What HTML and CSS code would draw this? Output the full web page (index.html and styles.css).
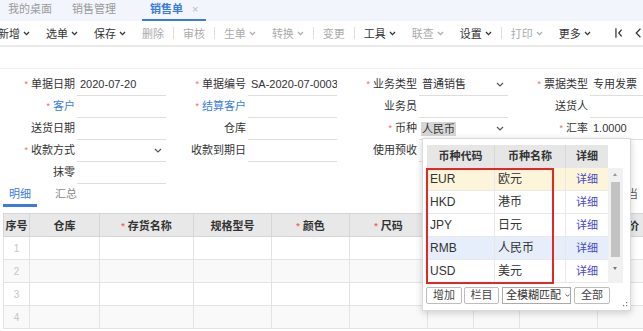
FILE: index.html
```html
<!DOCTYPE html>
<html lang="zh">
<head>
<meta charset="utf-8">
<link rel="stylesheet" href="styles.css">
</head>
<body>
<div class="tabbar">
  <span class="tab">我的桌面</span>
  <span class="tab tab2">销售管理</span>
  <span class="tab active">销售单<span class="close">×</span></span>
</div>

<div class="toolbar">
  <span class="ti">新增<svg class="cv" viewBox="0 0 7 5"><path d="M1 1 L3.5 3.6 L6 1"/></svg></span>
  <span class="ti">选单<svg class="cv" viewBox="0 0 7 5"><path d="M1 1 L3.5 3.6 L6 1"/></svg></span>
  <span class="ti">保存<svg class="cv" viewBox="0 0 7 5"><path d="M1 1 L3.5 3.6 L6 1"/></svg></span>
  <span class="ti dis plain">删除</span>
  <span class="sep"></span>
  <span class="ti dis plain">审核</span>
  <span class="sep"></span>
  <span class="ti dis">生单<svg class="cv" viewBox="0 0 7 5"><path d="M1 1 L3.5 3.6 L6 1"/></svg></span>
  <span class="ti dis nm">转换<svg class="cv" viewBox="0 0 7 5"><path d="M1 1 L3.5 3.6 L6 1"/></svg></span>
  <span class="sep"></span>
  <span class="ti dis plain">变更</span>
  <span class="sep"></span>
  <span class="ti">工具<svg class="cv" viewBox="0 0 7 5"><path d="M1 1 L3.5 3.6 L6 1"/></svg></span>
  <span class="ti dis">联查<svg class="cv" viewBox="0 0 7 5"><path d="M1 1 L3.5 3.6 L6 1"/></svg></span>
  <span class="ti nm">设置<svg class="cv" viewBox="0 0 7 5"><path d="M1 1 L3.5 3.6 L6 1"/></svg></span>
  <span class="sep"></span>
  <span class="ti dis">打印<svg class="cv" viewBox="0 0 7 5"><path d="M1 1 L3.5 3.6 L6 1"/></svg></span>
  <span class="ti">更多<svg class="cv" viewBox="0 0 7 5"><path d="M1 1 L3.5 3.6 L6 1"/></svg></span>
  <svg class="nav" viewBox="0 0 30 12"><path d="M1 1 V11"/><path d="M7 2.5 L4 6 L7 9.5"/><path d="M27 1.5 L22.5 6 L27 10.5"/></svg>
</div>

<div class="spacer"></div>

<div class="form">
  <div class="fld"><span class="lbl"><span class="req">*</span>单据日期</span><span class="inp">2020-07-20</span></div>
  <div class="fld"><span class="lbl"><span class="req">*</span>单据编号</span><span class="inp">SA-2020-07-0003</span></div>
  <div class="fld"><span class="lbl"><span class="req">*</span>业务类型</span><span class="inp">普通销售<svg class="dd" viewBox="0 0 8 5"><path d="M1 1 L4 4 L7 1"/></svg></span></div>
  <div class="fld"><span class="lbl"><span class="req">*</span>票据类型</span><span class="inp">专用发票</span></div>

  <div class="fld"><span class="lbl blue"><span class="req">*</span>客户</span><span class="inp"></span></div>
  <div class="fld"><span class="lbl blue"><span class="req">*</span>结算客户</span><span class="inp"></span></div>
  <div class="fld"><span class="lbl">业务员</span><span class="inp"></span></div>
  <div class="fld"><span class="lbl">送货人</span><span class="inp"></span></div>

  <div class="fld"><span class="lbl">送货日期</span><span class="inp"></span></div>
  <div class="fld"><span class="lbl">仓库</span><span class="inp"></span></div>
  <div class="fld"><span class="lbl"><span class="req">*</span>币种</span><span class="inp"><span class="sel">人民币</span><svg class="dd" viewBox="0 0 8 5"><path d="M1 1 L4 4 L7 1"/></svg></span></div>
  <div class="fld"><span class="lbl"><span class="req">*</span>汇率</span><span class="inp">1.0000</span></div>

  <div class="fld"><span class="lbl"><span class="req">*</span>收款方式</span><span class="inp"><span></span><svg class="dd" viewBox="0 0 8 5"><path d="M1 1 L4 4 L7 1"/></svg></span></div>
  <div class="fld"><span class="lbl">收款到期日</span><span class="inp"></span></div>
  <div class="fld"><span class="lbl">使用预收</span><span class="inp"></span></div>
  <div class="fld"></div>

  <div class="fld"><span class="lbl">抹零</span><span class="inp"></span></div>
</div>

<div class="subtabs">
  <span class="st active">明细</span>
  <span class="st st2">汇总</span>
  <span class="st-right">相当</span>
</div>

<table class="grid">
  <colgroup>
    <col class="c-no"><col class="c-wh"><col class="c-name"><col class="c-spec"><col class="c-color"><col class="c-size"><col class="c-s1"><col class="c-s2"><col class="c-m"><col class="c-last">
  </colgroup>
  <thead>
    <tr>
      <th>序号</th><th>仓库</th><th><span class="req">*</span>存货名称</th><th>规格型号</th><th><span class="req">*</span>颜色</th><th><span class="req">*</span>尺码</th><th></th><th></th><th></th><th class="th-last">单价</th>
    </tr>
  </thead>
  <tbody>
    <tr><td class="no">1</td><td></td><td></td><td></td><td></td><td></td><td></td><td></td><td></td><td></td></tr>
    <tr class="alt"><td class="no">2</td><td></td><td></td><td></td><td></td><td></td><td></td><td></td><td></td><td></td></tr>
    <tr><td class="no">3</td><td></td><td></td><td></td><td></td><td></td><td></td><td></td><td></td><td></td></tr>
    <tr class="alt"><td class="no">4</td><td></td><td></td><td></td><td></td><td></td><td></td><td></td><td></td><td></td></tr>
  </tbody>
</table>

<div class="popup">
  <div class="pp-head">
    <span class="pc c1">币种代码</span><span class="pc c2">币种名称</span><span class="pc c3">详细</span>
  </div>
  <div class="pp-body">
    <div class="pp-rows">
      <div class="pr eur"><span class="pc c1">EUR</span><span class="pc c2">欧元</span><span class="pc c3 link">详细</span></div>
      <div class="pr"><span class="pc c1">HKD</span><span class="pc c2">港币</span><span class="pc c3 link">详细</span></div>
      <div class="pr"><span class="pc c1">JPY</span><span class="pc c2">日元</span><span class="pc c3 link">详细</span></div>
      <div class="pr rmb"><span class="pc c1">RMB</span><span class="pc c2">人民币</span><span class="pc c3 link">详细</span></div>
      <div class="pr"><span class="pc c1">USD</span><span class="pc c2">美元</span><span class="pc c3 link">详细</span></div>
    </div>
    <div class="scroll">
      <span class="arr up"></span>
      <span class="thumb"></span>
      <span class="arr down"></span>
    </div>
  </div>
  <div class="pp-foot">
    <span class="btn b1">增加</span>
    <span class="btn b2">栏目</span>
    <span class="btn bsel">全模糊匹配<svg class="cv2" viewBox="0 0 7 5"><path d="M1 1 L3.5 3.6 L6 1"/></svg></span>
    <span class="btn b3">全部</span>
  </div>
  <div class="redbox"></div>
  <svg class="grip" viewBox="0 0 5 5"><rect x="3" y="0" width="1.2" height="1.2"/><rect x="3" y="3" width="1.2" height="1.2"/><rect x="0" y="3" width="1.2" height="1.2"/></svg>
</div>
</body>
</html>
```

FILE: styles.css
```css
* { box-sizing: border-box; }

body {
  margin: 0;
  width: 643px;
  height: 331px;
  overflow: hidden;
  position: relative;
  background: #fff;
  color: #333;
  font-family: "Liberation Sans", "Noto Sans CJK SC", sans-serif;
  font-size: 11px;
}

/* top tabs */
.tabbar {
  height: 21px;
  background: #f2f5fb;
  display: flex;
  align-items: flex-end;
}
.tab {
  height: 21px;
  line-height: 19px;
  padding: 0 8px;
  color: #9a9a9a;
  border-bottom: 2px solid transparent;
  white-space: nowrap;
}
.tab2 { margin-left: 4px; }
.tab.active {
  margin-left: 18px;
  color: #3b7be0;
  font-weight: bold;
  border-bottom-color: #3b7be0;
}
.close {
  margin-left: 9px;
  color: #bbb;
  font-weight: normal;
}

/* toolbar */
.toolbar {
  height: 26px;
  display: flex;
  align-items: center;
  margin-left: -2px;
  border-bottom: 2px solid #e9e9e9;
  white-space: nowrap;
}
.ti {
  display: flex;
  align-items: center;
  margin-right: 16px;
  color: #333;
}
.ti.dis { color: #ababab; }
.ti.plain, .ti.nm { margin-right: 0; }
.cv {
  width: 7px;
  height: 5px;
  margin-left: 3px;
  fill: none;
  stroke: currentColor;
  stroke-width: 1.3;
}
.sep {
  width: 1px;
  height: 12px;
  background: #dedede;
  margin: 0 9px;
}
.nav {
  width: 30px;
  height: 12px;
  margin-left: 8px;
  fill: none;
  stroke: #333;
  stroke-width: 1.3;
}

.spacer {
  height: 22px;
  border-bottom: 1px solid #f0f0f0;
}

/* form */
.form {
  display: grid;
  grid-template-columns: repeat(4, 171px);
  grid-auto-rows: 22px;
  padding-top: 5px;
}
.fld { display: flex; white-space: nowrap; }
.lbl {
  width: 75px;
  flex: none;
  text-align: right;
  line-height: 21px;
  color: #333;
}
.lbl.blue { color: #3d7ee0; }
.req {
  color: #f06a6a;
  font-size: 9px;
  margin-right: 3px;
  vertical-align: 1px;
}
.inp {
  width: 89px;
  flex: none;
  margin-left: 2px;
  height: 22px;
  line-height: 21px;
  padding: 0 3px 0 3px;
  border-bottom: 1px solid #dedede;
  display: flex;
  align-items: center;
  justify-content: space-between;
  color: #333;
  overflow: hidden;
}
.dd {
  width: 8px;
  height: 5px;
  fill: none;
  stroke: #555;
  stroke-width: 1.2;
  margin-right: 1px;
}
.sel {
  background: #d6d6d6;
  line-height: 14px;
  padding: 0 1px;
  margin-left: -1px;
}

/* sub tabs */
.subtabs {
  height: 23px;
  display: flex;
  padding-left: 3px;
}
.st {
  padding: 0 6px;
  line-height: 20px;
  height: 23px;
  border-bottom: 3px solid transparent;
  color: #888;
}
.st.active {
  color: #3b7be0;
  border-bottom-color: #3b7be0;
}
.st2 { margin-left: 12px; }
.st-right {
  margin-left: auto;
  margin-right: 5px;
  line-height: 20px;
  color: #555;
}

/* detail table */
.grid {
  margin: 6px 0 0 3px;
  border-collapse: collapse;
  table-layout: fixed;
  width: 678px;
}
.c-no { width: 26px; }
.c-wh { width: 70px; }
.c-name { width: 94px; }
.c-spec, .c-color, .c-size, .c-m { width: 78px; }
.c-s1, .c-s2 { width: 46px; }
.c-last { width: 84px; }
.grid th {
  height: 23px;
  background: #e8e8e8;
  border: 1px solid #d6d6d6;
  font-weight: bold;
  color: #333;
  padding: 0;
  white-space: nowrap;
  overflow: hidden;
}
.grid th.th-last {
  text-align: left;
  padding-left: 19px;
}
.grid td {
  height: 23px;
  border: 1px solid #e3e3e3;
  padding: 0;
}
.grid tr.alt td { background: #f9f9f9; }
.grid td.no {
  text-align: center;
  color: #c4c4c4;
  font-size: 10px;
}

/* popup */
.popup {
  position: absolute;
  left: 422px;
  top: 138px;
  width: 209px;
  height: 173px;
  background: #fff;
  border: 1px solid #dadada;
  box-shadow: 0 2px 7px rgba(0, 0, 0, 0.18);
  padding: 6px 0 0 4px;
}
.pp-head {
  display: flex;
  height: 23px;
}
.pp-head .pc {
  background: #e6e6e6;
  font-weight: bold;
  text-align: center;
  line-height: 23px;
  color: #333;
}
.pc {
  flex: none;
  overflow: hidden;
  white-space: nowrap;
}
.c1 { width: 68px; border-right: 1px solid #d8d8d8; }
.c2 { width: 71px; border-right: 1px solid #d8d8d8; }
.c3 { width: 42px; }
.pp-body {
  display: flex;
  height: 115px;
}
.pp-rows {
  width: 181px;
  overflow: hidden;
}
.pr {
  display: flex;
  height: 23px;
  border-bottom: 1px solid #e8e8e8;
  line-height: 22px;
  font-size: 12px;
}
.pr .c1, .pr .c2 {
  padding-left: 3px;
  border-right-color: #e8e8e8;
}
.pr .c3 { text-align: center; font-size: 11px; }
.pr.eur { background: #fdf5d9; }
.pr.rmb { background: #e5eefa; }
.link { color: #4646d0; }

.scroll {
  width: 15px;
  background: #f1f1f1;
  position: relative;
}
.thumb {
  position: absolute;
  left: 3px;
  top: 14px;
  width: 9px;
  height: 75px;
  background: #c3c3c3;
}
.arr {
  position: absolute;
  left: 5px;
  width: 0;
  height: 0;
  border-left: 2.5px solid transparent;
  border-right: 2.5px solid transparent;
}
.arr.up { top: 5px; border-bottom: 3px solid #999; }
.arr.down { bottom: 13px; border-top: 3px solid #777; }

.pp-foot {
  display: flex;
  margin-top: 4px;
  margin-left: -1px;
}
.btn {
  height: 17px;
  line-height: 15px;
  border: 1px solid #bdbdbd;
  border-radius: 2px;
  background: #fff;
  color: #444;
  text-align: center;
  white-space: nowrap;
}
.b1 { width: 36px; margin-right: 2px; }
.b2 { width: 35px; margin-right: 3px; }
.bsel {
  width: 69px;
  display: flex;
  align-items: center;
  padding-left: 3px;
  color: #333;
  border-color: #aaa;
  border-radius: 0;
}
.cv2 {
  width: 7px;
  height: 5px;
  margin-left: 4px;
  fill: none;
  stroke: #444;
  stroke-width: 1.3;
}
.b3 { width: 36px; margin-left: 3px; }

.redbox {
  position: absolute;
  left: 3px;
  top: 29px;
  width: 128px;
  height: 116px;
  border: 2px solid #e32727;
}
.grip {
  position: absolute;
  right: 2px;
  bottom: 3px;
  width: 5px;
  height: 5px;
  fill: #777;
}
```
